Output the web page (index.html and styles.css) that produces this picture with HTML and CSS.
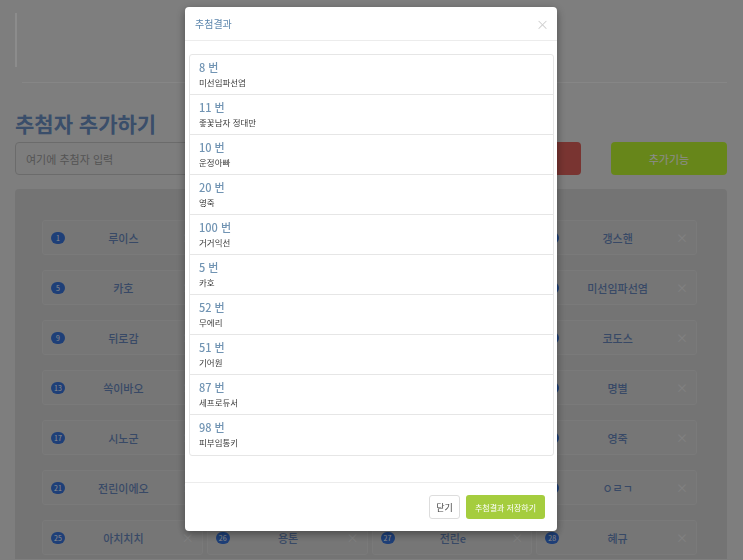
FILE: index.html
```html
<!DOCTYPE html>
<html lang="ko">
<head>
    <meta charset="UTF-8">
    <meta name="viewport" content="width=device-width, initial-scale=1.0">
    <title>추첨자 추가하기</title>
    <link rel="stylesheet" href="styles.css">
</head>
<body>
    <div class="page">
        <div class="intro"></div>
        <hr class="divider">
        <h1 class="page-title">추첨자 추가하기</h1>
        <div class="input-row">
            <input type="text" class="name-input" placeholder="여기에 추첨자 입력">
            <button class="btn btn-draw">추첨하기</button>
            <button class="btn btn-extra">추가기능</button>
        </div>
        <div class="panel">
            <div class="card-grid">
                <div class="card"><span class="badge">1</span><span class="card-name">루이스</span><span class="remove">×</span></div>
                <div class="card"><span class="badge">2</span><span class="card-name">조르딕</span><span class="remove">×</span></div>
                <div class="card"><span class="badge">3</span><span class="card-name">헤이든</span><span class="remove">×</span></div>
                <div class="card"><span class="badge">4</span><span class="card-name">갱스핸</span><span class="remove">×</span></div>

                <div class="card"><span class="badge">5</span><span class="card-name">카호</span><span class="remove">×</span></div>
                <div class="card"><span class="badge">6</span><span class="card-name">별다방</span><span class="remove">×</span></div>
                <div class="card"><span class="badge">7</span><span class="card-name">무지개</span><span class="remove">×</span></div>
                <div class="card"><span class="badge">8</span><span class="card-name">미선임파선염</span><span class="remove">×</span></div>

                <div class="card"><span class="badge">9</span><span class="card-name">뒤로감</span><span class="remove">×</span></div>
                <div class="card"><span class="badge">10</span><span class="card-name">운정아빠</span><span class="remove">×</span></div>
                <div class="card"><span class="badge">11</span><span class="card-name">좋꽃남자 정대만</span><span class="remove">×</span></div>
                <div class="card"><span class="badge">12</span><span class="card-name">코도스</span><span class="remove">×</span></div>

                <div class="card"><span class="badge">13</span><span class="card-name">쏙이바오</span><span class="remove">×</span></div>
                <div class="card"><span class="badge">14</span><span class="card-name">하늘색</span><span class="remove">×</span></div>
                <div class="card"><span class="badge">15</span><span class="card-name">달빛</span><span class="remove">×</span></div>
                <div class="card"><span class="badge">16</span><span class="card-name">명별</span><span class="remove">×</span></div>

                <div class="card"><span class="badge">17</span><span class="card-name">시노군</span><span class="remove">×</span></div>
                <div class="card"><span class="badge">18</span><span class="card-name">초코칩</span><span class="remove">×</span></div>
                <div class="card"><span class="badge">19</span><span class="card-name">파랑새</span><span class="remove">×</span></div>
                <div class="card"><span class="badge">20</span><span class="card-name">영죽</span><span class="remove">×</span></div>

                <div class="card"><span class="badge">21</span><span class="card-name">전린이에오</span><span class="remove">×</span></div>
                <div class="card"><span class="badge">22</span><span class="card-name">바람</span><span class="remove">×</span></div>
                <div class="card"><span class="badge">23</span><span class="card-name">고양이</span><span class="remove">×</span></div>
                <div class="card"><span class="badge">24</span><span class="card-name">ㅇㄹㄱ</span><span class="remove">×</span></div>

                <div class="card"><span class="badge">25</span><span class="card-name">아치치치</span><span class="remove">×</span></div>
                <div class="card"><span class="badge">26</span><span class="card-name">용톤</span><span class="remove">×</span></div>
                <div class="card"><span class="badge">27</span><span class="card-name">전린e</span><span class="remove">×</span></div>
                <div class="card"><span class="badge">28</span><span class="card-name">혜규</span><span class="remove">×</span></div>
            </div>
        </div>
    </div>

    <!-- result modal -->
    <div class="backdrop"></div>
    <div class="modal">
        <div class="modal-header">
            <span class="modal-title">추첨결과</span>
            <span class="modal-close">×</span>
        </div>
        <div class="modal-body">
            <ul class="result-list">
                <li><div class="result-num">8 번</div><div class="result-name">미선임파선염</div></li>
                <li><div class="result-num">11 번</div><div class="result-name">좋꽃남자 정대만</div></li>
                <li><div class="result-num">10 번</div><div class="result-name">운정아빠</div></li>
                <li><div class="result-num">20 번</div><div class="result-name">영죽</div></li>
                <li><div class="result-num">100 번</div><div class="result-name">거거익선</div></li>
                <li><div class="result-num">5 번</div><div class="result-name">카호</div></li>
                <li><div class="result-num">52 번</div><div class="result-name">무에리</div></li>
                <li><div class="result-num">51 번</div><div class="result-name">기어원</div></li>
                <li><div class="result-num">87 번</div><div class="result-name">세프로듀서</div></li>
                <li><div class="result-num">98 번</div><div class="result-name">피부임통키</div></li>
            </ul>
        </div>
        <div class="modal-footer">
            <button class="btn-close">닫기</button>
            <button class="btn-save">추첨결과 저장하기</button>
        </div>
    </div>
</body>
</html>
```

FILE: styles.css
```css
* {
    box-sizing: border-box;
}
body {
    margin: 0;
    height: 560px;
    font-family: 'Noto Sans CJK KR', 'Noto Sans', sans-serif;
    background-color: #e6e6e6;
    overflow: hidden;
}
.page {
    padding: 13px 16px 0 15px;
}
.intro {
    height: 54px;
    border-left: 2px solid #ffffff;
}
.divider {
    margin: 15px 0 0 7px;
    border: none;
    border-top: 1px solid #f4f4f4;
}
.page-title {
    margin: 25px 0 0;
    font-size: 21px;
    line-height: 30px;
    font-weight: 700;
    color: #6a8ec2;
}
.input-row {
    display: flex;
    margin-top: 4px;
    height: 33px;
}
.name-input {
    flex: 1;
    height: 33px;
    padding: 0 10px;
    border: 1px solid #c4c4c4;
    border-radius: 4px;
    background-color: #e4e4e4;
    font-family: inherit;
    font-size: 11px;
}
.name-input::placeholder {
    color: #9a9a9a;
}
.btn {
    border: none;
    border-radius: 4px;
    color: #ffffff;
    font-family: inherit;
    font-size: 11px;
    cursor: pointer;
}
.btn-draw {
    width: 120px;
    margin-left: 14px;
    background-color: #dc605a;
}
.btn-extra {
    width: 116px;
    margin-left: 30px;
    background-color: #bcf530;
}
.panel {
    margin-top: 14px;
    height: 370px;
    padding: 31px 30px 0 27px;
    background-color: #d4d4d4;
    border-radius: 4px 4px 0 0;
}
.card-grid {
    display: grid;
    grid-template-columns: repeat(4, 1fr);
    column-gap: 4px;
    row-gap: 15px;
}
.card {
    display: flex;
    align-items: center;
    height: 35px;
    padding: 0 8px;
    background-color: #d8d8d8;
    border: 1px solid #dedede;
    border-radius: 3px;
}
.badge {
    min-width: 14px;
    height: 12px;
    padding: 0 3px;
    border-radius: 6px;
    background-color: #3773da;
    color: #ffffff;
    font-size: 7px;
    line-height: 12px;
    text-align: center;
}
.card-name {
    flex: 1;
    text-align: center;
    font-size: 11px;
    font-weight: 500;
    color: #6786bb;
}
.remove {
    color: #ececec;
    font-size: 12px;
}
.backdrop {
    position: fixed;
    inset: 0;
    background-color: rgba(0, 0, 0, 0.45);
}
.modal {
    position: fixed;
    top: 7px;
    left: 185px;
    width: 372px;
    background-color: #ffffff;
    border-radius: 4px;
    box-shadow: 0 3px 10px rgba(0, 0, 0, 0.4);
}
.modal-header {
    display: flex;
    justify-content: space-between;
    align-items: center;
    height: 34px;
    padding: 0 8px 0 10px;
    border-bottom: 1px solid #ececec;
}
.modal-title {
    font-size: 10px;
    color: #5c86ad;
}
.modal-close {
    color: #cfcfcf;
    font-size: 13px;
}
.modal-body {
    padding: 13px 3px 26px 4px;
}
.result-list {
    list-style: none;
    margin: 0;
    padding: 0;
    border: 1px solid #e6e6e6;
    border-radius: 3px;
}
.result-list li {
    height: 40px;
    padding: 4px 9px 0;
    border-bottom: 1px solid #e6e6e6;
}
.result-list li:last-child {
    border-bottom: none;
}
.result-num {
    font-size: 11px;
    line-height: 16px;
    font-weight: 500;
    color: #7194b3;
}
.result-name {
    font-size: 8.5px;
    line-height: 14px;
    color: #3a3a3a;
}
.modal-footer {
    display: flex;
    justify-content: flex-end;
    gap: 6px;
    padding: 12px;
    border-top: 1px solid #ececec;
}
.btn-close {
    width: 31px;
    height: 24px;
    border: 1px solid #dddddd;
    border-radius: 3px;
    background-color: #ffffff;
    color: #444444;
    font-family: inherit;
    font-size: 9px;
    padding: 0;
}
.btn-save {
    width: 79px;
    height: 24px;
    border: none;
    border-radius: 3px;
    background-color: #a5cd3e;
    color: #ffffff;
    font-family: inherit;
    font-size: 8px;
    padding: 0;
}
```
